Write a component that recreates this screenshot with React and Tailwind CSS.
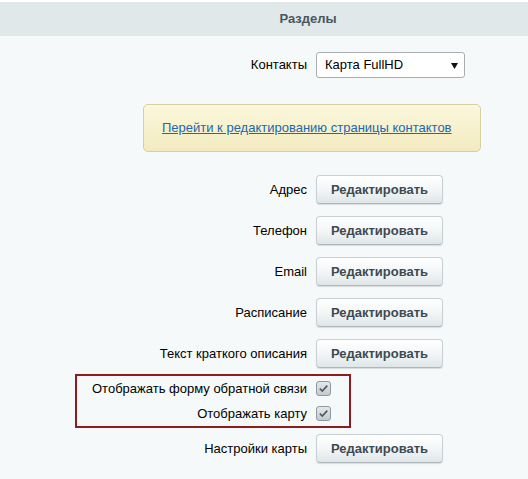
import React from 'react';

const font = { fontFamily: '"Liberation Sans", Arial, sans-serif' };

function EditButton() {
    return (
        <button className="h-[29px] w-[127px] rounded-[4px] border border-[#c9d0d3] border-b-[#aeb8bc] bg-gradient-to-b from-[#ffffff] via-[#f3f6f7] to-[#dfe6e8] text-[13px] font-bold text-[#3d4a52] shadow-[0_1px_1px_rgba(0,0,0,0.12)]">
            Редактировать
        </button>
    );
}

function Check() {
    return (
        <span className="flex h-[15px] w-[15px] items-center justify-center rounded-[3px] border border-[#8f999e] bg-gradient-to-b from-[#e4e8ea] to-[#c3cace]">
            <svg width="11" height="11" viewBox="0 0 11 11">
                <path d="M1.8 5.6 L4.3 8.1 L9.3 2.6" fill="none" stroke="#4f5a60" strokeWidth="1.6" />
            </svg>
        </span>
    );
}

function Row({ label, children, className = "" }) {
    return (
        <div className={`flex items-center ${className}`}>
            <div className="w-[307px] pr-0 text-right text-[13px] text-black">{label}</div>
            <div className="ml-[9px]">{children}</div>
        </div>
    );
}

export default function App() {
    const editRows = ["Адрес", "Телефон", "Email", "Расписание", "Текст краткого описания"];

    return (
        <div className="min-h-screen border-t-2 border-white bg-[#f5f9f9]" style={font}>
            {/* section title */}
            <div className="flex h-[34px] items-center justify-center bg-[#e0e8ea] pl-[88px] text-[13px] font-bold text-[#4a575e]">
                Разделы
            </div>

            <Row label="Контакты" className="mt-[16px] h-[26px]">
                <div className="relative flex h-[26px] w-[149px] items-center rounded-[3px] border border-[#a9adb0] bg-white pl-[8px] text-[13px] text-black">
                    Карта FullHD
                    <svg className="absolute right-[6px] top-[10px]" width="7" height="6" viewBox="0 0 7 6">
                        <path d="M0 0 H7 L3.5 6 Z" fill="#111" />
                    </svg>
                </div>
            </Row>

            <div className="ml-[143px] mt-[26px] flex h-[48px] w-[338px] items-center rounded-[5px] border border-[#d8cf9f] bg-gradient-to-b from-[#fbf7dc] to-[#f2ebc0] pl-[18px]">
                <a href="#" className="text-[13px] text-[#2167b1] underline">
                    Перейти к редактированию страницы контактов
                </a>
            </div>

            <div className="mt-[23px] flex flex-col gap-[12px]">
                {editRows.map((label) => (
                    <Row key={label} label={label}>
                        <EditButton />
                    </Row>
                ))}
            </div>

            {/* flags */}
            <div className="ml-[75px] mt-[6px] w-[276px] border-2 border-[#8e1b1e]">
                <div className="flex h-[25px] items-center">
                    <div className="w-[230px] text-right text-[13px] text-black">Отображать форму обратной связи</div>
                    <div className="ml-[9px]"><Check /></div>
                </div>
                <div className="flex h-[25px] items-center">
                    <div className="w-[230px] text-right text-[13px] text-black">Отображать карту</div>
                    <div className="ml-[9px]"><Check /></div>
                </div>
            </div>

            <Row label="Настройки карты" className="mt-[6px]">
                <EditButton />
            </Row>
        </div>
    );
}
